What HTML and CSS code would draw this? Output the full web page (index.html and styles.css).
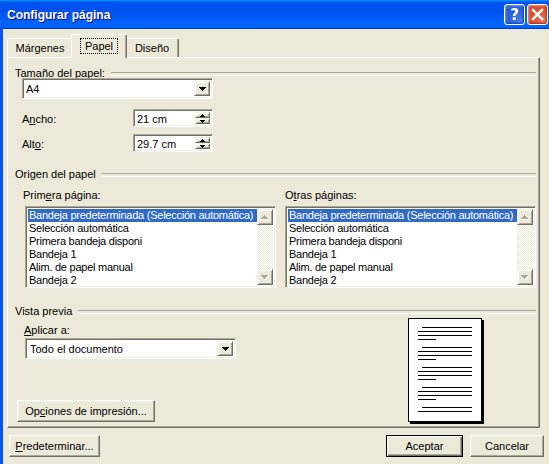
FILE: index.html
```html
<!DOCTYPE html>
<html lang="es">
<head>
<meta charset="utf-8">
<title>Configurar página</title>
<link rel="stylesheet" href="styles.css">
</head>
<body>
<div class="window">
  <div class="titlebar">
    <span class="title">Configurar página</span>
    <span class="tbtn help">?</span>
    <span class="tbtn close"><svg width="13" height="13" viewBox="0 0 13 13"><path d="M2 2 L11 11 M11 2 L2 11" stroke="#fff" stroke-width="2.4" stroke-linecap="square"/></svg></span>
  </div>
  <div class="client">
    <div class="tabs">
      <div class="tab t1">Márgenes</div>
      <div class="tab t2 sel"><span class="focus">Papel</span></div>
      <div class="tab t3">Diseño</div>
    </div>
    <div class="panel">
      <div class="legend">Tama<u>ñ</u>o del papel:</div>
      <div class="combo sunken c-a4">
        <span class="ctext">A4</span>
        <span class="cbtn raised"><svg width="7" height="4" viewBox="0 0 7 4"><path d="M0 0H7V1H6V2H5V3H4V4H3V3H2V2H1V1H0Z" fill="#000"/></svg></span>
      </div>
      <div class="frow r1">
        <span class="flabel">A<u>n</u>cho:</span>
        <div class="spin sunken">
          <span class="stext">21 cm</span>
          <span class="sbtns">
            <span class="sb raised"><svg width="5" height="3" viewBox="0 0 5 3"><path d="M0 3H5V2H4V1H3V0H2V1H1V2H0Z" fill="#000"/></svg></span>
            <span class="sb raised"><svg width="5" height="3" viewBox="0 0 5 3"><path d="M0 0H5V1H4V2H3V3H2V2H1V1H0Z" fill="#000"/></svg></span>
          </span>
        </div>
      </div>
      <div class="frow r2">
        <span class="flabel">Alt<u>o</u>:</span>
        <div class="spin sunken">
          <span class="stext">29.7 cm</span>
          <span class="sbtns">
            <span class="sb raised"><svg width="5" height="3" viewBox="0 0 5 3"><path d="M0 3H5V2H4V1H3V0H2V1H1V2H0Z" fill="#000"/></svg></span>
            <span class="sb raised"><svg width="5" height="3" viewBox="0 0 5 3"><path d="M0 0H5V1H4V2H3V3H2V2H1V1H0Z" fill="#000"/></svg></span>
          </span>
        </div>
      </div>

      <div class="legend l2">Origen del papel</div>
      <div class="cols">
        <div class="col left">
          <div class="clabel">Prim<u>e</u>ra página:</div>
          <div class="listbox sunken">
            <div class="items">
              <div class="item selitem">Bandeja predeterminada (Selección automática)</div>
              <div class="item">Selección automática</div>
              <div class="item">Primera bandeja disponi</div>
              <div class="item">Bandeja 1</div>
              <div class="item">Alim. de papel manual</div>
              <div class="item">Bandeja 2</div>
            </div>
            <div class="vscroll">
              <span class="sbtn raised"><svg width="8" height="5" viewBox="0 0 8 5"><path d="M1 5H8V4H7V3H6V2H5V1H4V2H3V3H2V4H1Z" fill="#fff"/><path d="M0 4H7V3H6V2H5V1H4V0H3V1H2V2H1V3H0Z" fill="#ACA899"/></svg></span>
              <span class="track"></span>
              <span class="sbtn raised"><svg width="8" height="5" viewBox="0 0 8 5"><path d="M1 1H8V2H7V3H6V4H5V5H4V4H3V3H2V2H1Z" fill="#fff"/><path d="M0 0H7V1H6V2H5V3H4V4H3V3H2V2H1V1H0Z" fill="#ACA899"/></svg></span>
            </div>
          </div>
        </div>
        <div class="col right">
          <div class="clabel">O<u>t</u>ras páginas:</div>
          <div class="listbox sunken">
            <div class="items">
              <div class="item selitem">Bandeja predeterminada (Selección automática)</div>
              <div class="item">Selección automática</div>
              <div class="item">Primera bandeja disponi</div>
              <div class="item">Bandeja 1</div>
              <div class="item">Alim. de papel manual</div>
              <div class="item">Bandeja 2</div>
            </div>
            <div class="vscroll">
              <span class="sbtn raised"><svg width="8" height="5" viewBox="0 0 8 5"><path d="M1 5H8V4H7V3H6V2H5V1H4V2H3V3H2V4H1Z" fill="#fff"/><path d="M0 4H7V3H6V2H5V1H4V0H3V1H2V2H1V3H0Z" fill="#ACA899"/></svg></span>
              <span class="track"></span>
              <span class="sbtn raised"><svg width="8" height="5" viewBox="0 0 8 5"><path d="M1 1H8V2H7V3H6V4H5V5H4V4H3V3H2V2H1Z" fill="#fff"/><path d="M0 0H7V1H6V2H5V3H4V4H3V3H2V2H1V1H0Z" fill="#ACA899"/></svg></span>
            </div>
          </div>
        </div>
      </div>

      <div class="legend l3">Vista previa</div>
      <div class="preview">
        <div class="pleft">
          <div class="alabel"><u>A</u>plicar a:</div>
          <div class="combo sunken c-todo">
            <span class="ctext">Todo el documento</span>
            <span class="cbtn raised"><svg width="7" height="4" viewBox="0 0 7 4"><path d="M0 0H7V1H6V2H5V3H4V4H3V3H2V2H1V1H0Z" fill="#000"/></svg></span>
          </div>
          <div class="btn raisedbtn opciones">Op<u>c</u>iones de impresión...</div>
        </div>
        <svg class="page" width="76" height="106" viewBox="0 0 76 106" shape-rendering="crispEdges">
          <rect x="74" y="2" width="2" height="104" fill="#000"/>
          <rect x="2" y="104" width="74" height="2" fill="#000"/>
          <rect x="0.5" y="0.5" width="73" height="103" fill="#fff" stroke="#000" stroke-width="1"/>
          <g fill="#000">
            <rect x="14" y="9" width="50" height="1"/><rect x="10" y="13" width="54" height="1"/><rect x="10" y="17" width="54" height="1"/><rect x="10" y="21" width="18" height="1"/>
            <rect x="14" y="29" width="50" height="1"/><rect x="10" y="33" width="54" height="1"/><rect x="10" y="37" width="54" height="1"/><rect x="10" y="41" width="18" height="1"/>
            <rect x="14" y="49" width="50" height="1"/><rect x="10" y="53" width="54" height="1"/><rect x="10" y="57" width="54" height="1"/><rect x="10" y="61" width="18" height="1"/>
            <rect x="14" y="69" width="50" height="1"/><rect x="10" y="73" width="54" height="1"/><rect x="10" y="77" width="54" height="1"/><rect x="10" y="81" width="18" height="1"/>
            <rect x="14" y="89" width="50" height="1"/><rect x="10" y="93" width="54" height="1"/>
          </g>
        </svg>
      </div>
    </div>
    <div class="footer">
      <div class="btn raisedbtn predet"><u>P</u>redeterminar...</div>
      <div class="spacer"></div>
      <div class="btn defbtn aceptar">Aceptar</div>
      <div class="btn raisedbtn cancelar">Cancelar</div>
    </div>
  </div>
</div>
</body>
</html>
```

FILE: styles.css
```css
* { box-sizing: border-box; }
html, body { margin: 0; padding: 0; }
body {
  width: 549px;
  height: 464px;
  overflow: hidden;
  background: #ECE9D8;
  font-family: "Liberation Sans", Arial, sans-serif;
  font-size: 11px;
  color: #000;
}
u { text-decoration: underline; text-underline-offset: 1px; }

.window {
  width: 549px;
  height: 464px;
  display: flex;
  flex-direction: column;
}

/* Title bar */
.titlebar {
  height: 29px;
  flex: none;
  display: flex;
  align-items: center;
  padding: 0 1px 0 7px;
  background: linear-gradient(180deg, #0997ff, #0053ee 8%, #0050ee 40%, #0066ff 88%, #0066ff 93%, #005bff 95%, #003dd7 96%, #003dd7);
}
.title {
  flex: 1;
  color: #fff;
  font-weight: bold;
  font-size: 12px;
  text-shadow: 1px 1px #0f1089;
  padding-top: 1px;
}
.tbtn {
  width: 21px;
  height: 21px;
  border: 1px solid #fff;
  border-radius: 3px;
  display: flex;
  align-items: center;
  justify-content: center;
  color: #fff;
  font-weight: bold;
  font-family: "DejaVu Sans", sans-serif;
  font-size: 15px;
  margin-left: 2px;
}
.help {
  background: radial-gradient(circle at 80% 85%, #4a80f0 0%, #2d63d8 45%, #1f55d0 100%);
  box-shadow: inset -1px -1px 2px #1040b0, inset 1px 1px 2px #7aa0f5;
}
.close {
  background: radial-gradient(circle at 85% 85%, #e87a5c 0%, #dd5530 45%, #cf4520 100%);
  box-shadow: inset -1px -1px 2px #a83010, inset 1px 1px 2px #f09a80;
}

/* Client area */
.client {
  flex: 1;
  border-left: 3px solid #0a56e6;
  padding: 5px 0 0 4px;
  background: #ECE9D8;
}

/* 3D borders */
.raised {
  background: #ECE9D8;
  border: 1px solid;
  border-color: #F1EFE2 #716F64 #716F64 #F1EFE2;
  box-shadow: inset 1px 1px #fff, inset -1px -1px #ACA899;
}
.sunken {
  background: #fff;
  border: 1px solid;
  border-color: #ACA899 #fff #fff #ACA899;
  box-shadow: inset 1px 1px #716F64, inset -1px -1px #F1EFE2;
}

/* Tabs */
.tabs {
  height: 23px;
  display: flex;
  align-items: flex-end;
}
.tab {
  position: relative;
  height: 19px;
  background: #ECE9D8;
  border-top: 1px solid #fff;
  border-left: 1px solid #fff;
  border-right: 1px solid #716F64;
  box-shadow: inset -1px 0 #ACA899;
  border-radius: 2px 2px 0 0;
  text-align: center;
  line-height: 16px;
  padding-top: 1px;
}
.t1 { width: 66px; }
.t2 { width: 52px; }
.t3 { width: 54px; }
.tab.sel {
  z-index: 2;
  width: 56px;
  height: 24px;
  margin: 0 -2px -1px;
  padding-top: 4px;
  line-height: 14px;
}
.focus {
  display: inline-block;
  outline: 1px dotted #000;
  outline-offset: 0;
  padding: 0 4px;
  line-height: 14px;
}

/* Panel */
.panel {
  position: relative;
  z-index: 1;
  width: 533px;
  height: 371px;
  border-top: 1px solid #fff;
  border-left: 1px solid #fff;
  border-right: 1px solid #716F64;
  border-bottom: 1px solid #716F64;
  box-shadow: inset -1px -1px #ACA899;
  padding: 10px 3px 0 7px;
  display: flex;
  flex-direction: column;
}

.legend {
  height: 10px;
  line-height: 10px;
  display: flex;
  align-items: center;
  white-space: nowrap;
}
.legend::after {
  content: "";
  flex: 1;
  height: 2px;
  margin-left: 6px;
  margin-top: 1px;
  border-top: 1px solid #ACA899;
  border-bottom: 1px solid #fff;
}
.l2 { margin-top: 17px; }
.l3 { margin-top: 18px; }

/* Combo */
.combo {
  height: 21px;
  display: flex;
  align-items: stretch;
  padding: 2px;
}
.c-a4 { width: 191px; margin-left: 7px; }
.ctext {
  flex: 1;
  line-height: 17px;
  padding-left: 1px;
}
.cbtn {
  width: 16px;
  display: flex;
  align-items: center;
  justify-content: center;
}
.cbtn svg { display: block; }

/* Field rows */
.frow {
  display: flex;
  align-items: center;
  margin-left: 7px;
  height: 18px;
}
.r1 { margin-top: 10px; }
.r2 { margin-top: 7px; }
.flabel { width: 111px; padding-top: 2px; }
.spin {
  width: 80px;
  height: 18px;
  display: flex;
  padding: 2px;
}
.stext { flex: 1; line-height: 14px; padding-left: 1px; }
.sbtns { width: 15px; display: flex; flex-direction: column; }
.sb {
  flex: 1;
  display: flex;
  align-items: center;
  justify-content: center;
}
.sb svg { display: block; }

/* Columns */
.cols {
  display: flex;
  margin-left: 10px;
  margin-top: 10px;
  gap: 9px;
}
.col { width: 251px; display: flex; flex-direction: column; }
.clabel { height: 12px; line-height: 12px; margin-bottom: 5px; margin-left: -2px; }
.col.right .clabel { margin-left: 0; }
.listbox {
  height: 82px;
  display: flex;
  padding: 2px;
}
.items { flex: 1; min-width: 0; }
.item {
  height: 13px;
  line-height: 13px;
  padding-left: 1px;
  white-space: nowrap;
  letter-spacing: -0.25px;
}
.selitem { background: #316AC5; color: #fff; }
.vscroll { width: 16px; flex: none; display: flex; flex-direction: column; }
.sbtn {
  height: 16px;
  flex: none;
  display: flex;
  align-items: center;
  justify-content: center;
}
.sbtn svg { display: block; }
.track {
  flex: 1;
  background: repeating-conic-gradient(#fff 0 25%, #ECE9D8 0 50%) 0 0 / 2px 2px;
}

/* Preview */
.preview { display: flex; }
.pleft { width: 221px; display: flex; flex-direction: column; }
.alabel { height: 12px; line-height: 12px; margin-top: 8px; margin-left: 9px; }
.c-todo { width: 211px; margin-left: 10px; margin-top: 2px; }
.c-todo .ctext { padding-left: 2px; }
.opciones { margin-top: 41px; margin-left: 2px; width: 138px; }
.page { display: block; margin-left: 172px; margin-top: 2px; }

/* Buttons */
.btn {
  height: 22px;
  display: flex;
  align-items: center;
  justify-content: center;
  white-space: nowrap;
  background: #ECE9D8;
}
.raisedbtn {
  border: 1px solid;
  border-color: #fff #716F64 #716F64 #fff;
  box-shadow: inset -1px -1px #ACA899, inset 1px 1px #F1EFE2;
}
.defbtn {
  border: 1px solid #000;
  box-shadow: inset 1px 1px #fff, inset -1px -1px #716F64, inset -2px -2px #ACA899;
}

.footer {
  display: flex;
  margin-top: 7px;
  padding-right: 5px;
}
.predet { width: 91px; margin-left: 2px; }
.spacer { flex: 1; }
.aceptar { width: 77px; }
.cancelar { width: 74px; margin-left: 7px; }
```
